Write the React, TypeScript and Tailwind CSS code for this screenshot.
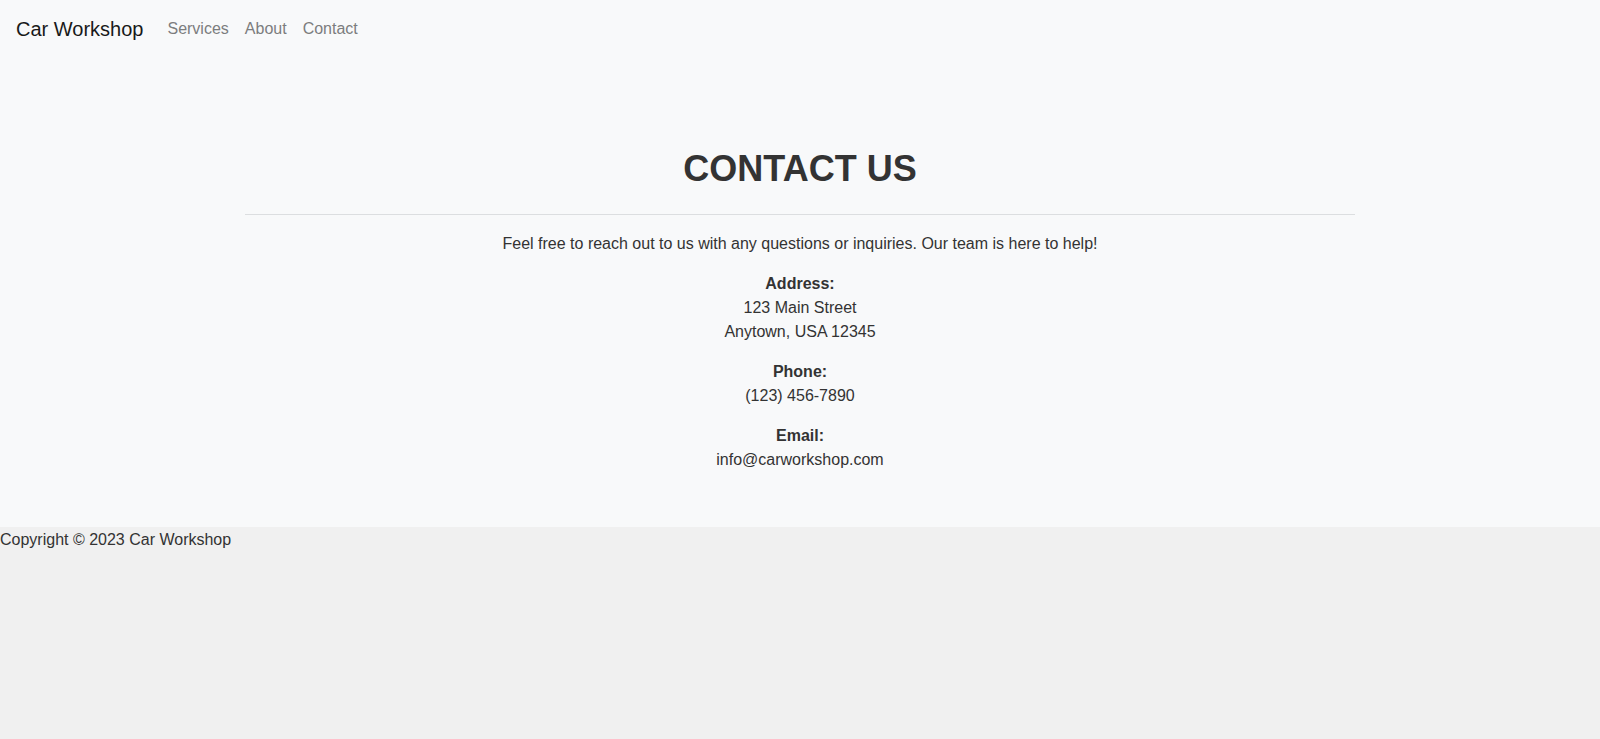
export default function App() {
  return (
    <div className="min-h-screen bg-[#f0f0f0] text-[16px] leading-6 text-[#333333]" style={{ fontFamily: '"Liberation Sans", Arial, sans-serif' }}>
      <div className="bg-[#f8f9fa]">
        <nav className="flex h-[58px] items-center px-4">
          <span className="mr-4 text-[20px] leading-[30px] text-[#191919]">Car Workshop</span>
          <a className="px-2 text-[#7c7d7e]" href="#">Services</a>
          <a className="px-2 text-[#7c7d7e]" href="#">About</a>
          <a className="px-2 text-[#7c7d7e]" href="#">Contact</a>
        </nav>
        <section className="mx-auto w-[1140px] px-[15px] pt-[89px] pb-[39px] text-center">
          <h1 className="mb-[24px] text-[36px] font-bold leading-[43px] text-[#333333]">CONTACT US</h1>
          <hr className="mb-[17px] border-0 border-t border-[#dcdee0]" />
          <p className="mb-4">Feel free to reach out to us with any questions or inquiries. Our team is here to help!</p>
          <p className="mb-4">
            <strong>Address:</strong>
            <br />
            123 Main Street
            <br />
            Anytown, USA 12345
          </p>
          <p className="mb-4">
            <strong>Phone:</strong>
            <br />
            (123) 456-7890
          </p>
          <p className="mb-4">
            <strong>Email:</strong>
            <br />
            info@carworkshop.com
          </p>
        </section>
      </div>
      <footer className="pt-px">
        <p>Copyright © 2023 Car Workshop</p>
      </footer>
    </div>
  );
}
